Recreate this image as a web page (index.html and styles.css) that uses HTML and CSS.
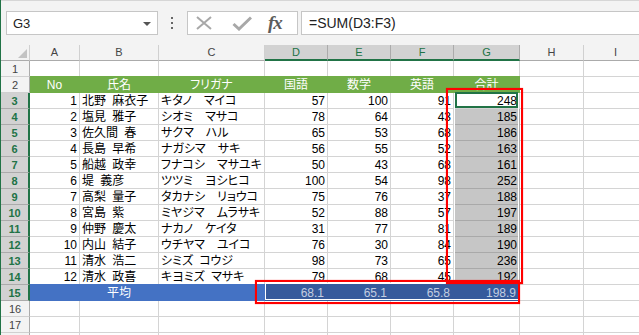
FILE: index.html
```html
<!DOCTYPE html>
<html lang="ja">
<head>
    <meta charset="UTF-8">
    <title>合計 - Excel</title>
    <link rel="stylesheet" href="styles.css">
</head>
<body>

    <div class="window">

        <!-- Barra de fórmulas -->
        <div class="formula-bar">
            <div class="name-box">
                <span>G3</span>
                <span class="drop"></span>
            </div>
            <div class="dots">
                <svg width="3" height="12" viewBox="0 0 3 12"><rect x="0" y="0" width="2" height="2"/><rect x="0" y="5" width="2" height="2"/><rect x="0" y="10" width="2" height="2"/></svg>
            </div>
            <div class="fx-box">
                <svg class="ico-x" width="16" height="14" viewBox="0 0 16 14"><path d="M1 1 L15 13 M15 1 L1 13"/></svg>
                <svg class="ico-ok" width="20" height="15" viewBox="0 0 20 15"><path d="M1.5 8 L7 13 L19 1.5"/></svg>
                <i class="fx">fx</i>
            </div>
            <div class="formula">=SUM(D3:F3)</div>
        </div>

        <!-- Hoja -->
        <div class="sheet" id="sheet"></div>

    </div>

    <script>
        const cols = ['A', 'B', 'C', 'D', 'E', 'F', 'G', 'H', 'I'];
        const heads = ['No', '氏名', 'フリガナ', '国語', '数学', '英語', '合計'];
        const data = [
            [1, '北野 麻衣子', 'キタノ　マイコ', 57, 100, 91, 248],
            [2, '塩見 雅子', 'シオミ　マサコ', 78, 64, 43, 185],
            [3, '佐久間 春', 'サクマ　ハル', 65, 53, 68, 186],
            [4, '長島 早希', 'ナガシマ　サキ', 56, 55, 52, 163],
            [5, '船越 政幸', 'フナコシ　マサユキ', 50, 43, 68, 161],
            [6, '堤 義彦', 'ツツミ　ヨシヒコ', 100, 54, 98, 252],
            [7, '高梨 量子', 'タカナシ　リョウコ', 75, 76, 37, 188],
            [8, '宮島 紫', 'ミヤジマ　ムラサキ', 52, 88, 57, 197],
            [9, '仲野 慶太', 'ナカノ　ケイタ', 31, 77, 81, 189],
            [10, '内山 結子', 'ウチヤマ　ユイコ', 76, 30, 84, 190],
            [11, '清水 浩二', 'シミズ コウジ', 98, 73, 65, 236],
            [12, '清水 政喜', 'キヨミズ マサキ', 79, 68, 45, 192]
        ];
        const avg = ['68.1', '65.1', '65.8', '198.9'];

        function cell(cls, text) {
            return `<div class="cell ${cls}">${text === undefined ? '' : text}</div>`;
        }

        function buildSheet() {
            let html = `<div class="corner"><svg width="9" height="9" viewBox="0 0 9 9"><polygon points="9,0 9,9 0,9"/></svg></div>`;
            cols.forEach((c, i) => {
                html += `<div class="col-head${i >= 3 && i <= 6 ? ' sel' : ''}">${c}</div>`;
            });

            // la fila 18 apenas asoma por abajo: sin número
            for (let r = 1; r <= 18; r++) {
                const sel = r >= 3 && r <= 15;
                html += `<div class="row-head${sel ? ' sel' : ''}">${r < 18 ? r : ''}</div>`;

                if (r === 2) {
                    heads.forEach(h => html += cell('hd', h));
                    html += cell('') + cell('');
                } else if (r >= 3 && r <= 14) {
                    const d = data[r - 3];
                    html += cell('num', d[0]) + cell('txt', d[1]) + cell('txt', d[2]);
                    html += cell('num', d[3]) + cell('num', d[4]) + cell('num', d[5]);
                    html += cell(r === 3 ? 'num' : 'num shade', d[6]);
                    html += cell('') + cell('');
                } else if (r === 15) {
                    html += cell('avg') + cell('avg center', '平均') + cell('avg');
                    avg.forEach(v => html += cell('avg num avg-sel', v));
                    html += cell('') + cell('');
                } else {
                    cols.forEach(() => html += cell(''));
                }
            }

            // selección y marcas
            html += `<div class="range range-g"></div>`;
            html += `<div class="range range-avg"></div>`;
            html += `<div class="active-box"></div>`;
            html += `<div class="mark mark-g"></div>`;
            html += `<div class="mark mark-avg"></div>`;

            document.getElementById('sheet').innerHTML = html;
        }

        buildSheet();
    </script>

</body>
</html>
```

FILE: styles.css
```css
* { box-sizing: border-box; }
body { margin: 0; background: #fff; font-family: "Liberation Sans", "Noto Sans CJK JP", sans-serif; overflow: hidden; }
.window { width: 639px; height: 335px; border-left: 1px solid #217346; overflow: hidden; }

/* Barra de fórmulas */
.formula-bar { display: flex; align-items: flex-start; height: 45px; padding: 10px 0 0 5px; background: #f3f3f3; border-top: 1px solid #d6d6d6; }
.name-box { width: 152px; height: 24px; background: #fff; border: 1px solid #c6c6c6; display: flex; align-items: center; justify-content: space-between; padding: 0 6px 0 6px; font-size: 13px; color: #222; }
.drop { width: 0; height: 0; border-left: 4px solid transparent; border-right: 4px solid transparent; border-top: 4px solid #555; margin-top: 1px; }
.dots { width: 29px; height: 24px; display: flex; align-items: center; justify-content: center; fill: #666; }
.fx-box { width: 111px; height: 24px; background: #fff; border: 1px solid #c6c6c6; display: flex; align-items: center; padding-left: 8px; }
.ico-x { stroke: #a8a8a8; stroke-width: 2; fill: none; }
.ico-ok { stroke: #a8a8a8; stroke-width: 3; fill: none; margin-left: 20px; }
.fx { font-family: "Liberation Serif", serif; font-size: 19px; font-weight: bold; color: #5c5c5c; margin-left: 16px; letter-spacing: -1px; }
.formula { flex: 1; height: 24px; margin: 0 -2px 0 3px; background: #fff; border: 1px solid #c6c6c6; padding-left: 7px; font-size: 14px; line-height: 22px; color: #222; }

/* Hoja */
.sheet { position: relative; display: grid; grid-template-columns: 29px 50px 79px 106px 63px 63px 63px 66px 64px 64px; grid-auto-rows: 16px; font-size: 12px; }
.corner { background: #f3f3f3; border-right: 1px solid #d0d0d0; border-bottom: 1px solid #ababab; display: flex; justify-content: flex-end; align-items: flex-end; padding: 0 2px 2px 0; fill: #c3c3c3; }
.col-head { background: #f3f3f3; border-right: 1px solid #d0d0d0; border-bottom: 1px solid #ababab; text-align: center; font-size: 11px; line-height: 15px; color: #444; }
.col-head.sel { background: #d2d2d2; color: #217346; border-right-color: #ababab; border-bottom: 2px solid #217346; }
.row-head { background: #f3f3f3; border-right: 1px solid #ababab; border-bottom: 1px solid #d0d0d0; text-align: center; font-size: 11px; line-height: 16px; color: #444; }
.row-head.sel { background: #d2d2d2; color: #217346; font-weight: bold; border-right: 2px solid #217346; border-bottom-color: #ababab; }

.cell { border-right: 1px solid #d4d4d4; border-bottom: 1px solid #d4d4d4; line-height: 16px; white-space: nowrap; overflow: hidden; padding: 0 2px; color: #000; font-feature-settings: "palt"; }
.txt { padding-left: 2px; word-spacing: 3px; }
.num { text-align: right; }
.center { text-align: center; }
.hd { background: #70ad47; border-color: #70ad47; box-shadow: 0 -1px 0 #70ad47; color: #fff; text-align: center; }
.avg { background: #4472c4; border-color: #4472c4; box-shadow: 0 -1px 0 #4472c4; color: #fff; }
.avg-sel { background: #365a9c; border-color: #365a9c; box-shadow: 0 -1px 0 #365a9c; color: #c3cde0; padding-right: 3px; }
.shade { background: #c6c6c6; border-bottom-color: #a9a9a9; border-right-color: #a9a9a9; }

/* Rango seleccionado y celda activa */
.range { position: absolute; border: 1px solid #fff; pointer-events: none; }
.range-g { grid-column: 8 / 9; grid-row: 4 / 16; top: 0; left: 0; right: 1px; bottom: 1px; }
.range-avg { grid-column: 5 / 9; grid-row: 16 / 17; top: -2px; left: 0; right: 1px; bottom: 1px; }
.active-box { position: absolute; grid-column: 8 / 9; grid-row: 4 / 5; top: -1px; left: 1px; right: 2px; bottom: 1px; border: 2px solid #217346; }

/* Marcas rojas */
.mark { position: absolute; border: 2px solid #ff0000; box-shadow: 0 0 1px rgba(255, 0, 0, 0.6); }
.mark-g { grid-column: 8 / 9; grid-row: 4 / 16; top: -5px; left: -8px; right: -3px; bottom: 1px; }
.mark-avg { grid-column: 5 / 9; grid-row: 16 / 17; top: -5px; left: -10px; right: 0; bottom: -3px; }
```
